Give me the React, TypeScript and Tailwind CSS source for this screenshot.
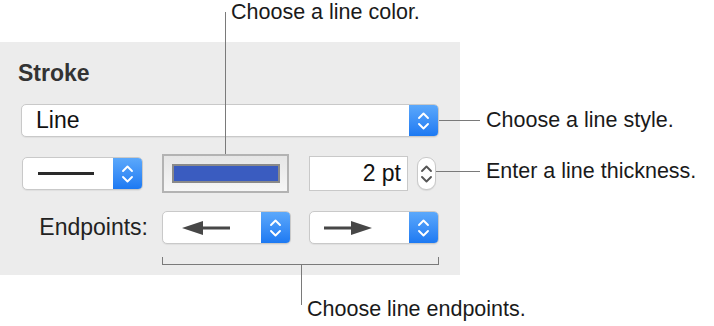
import React from "react";

const FONT = "font-['Helvetica_Neue','Liberation_Sans',Arial,sans-serif]";

function Chevrons({ color = "#fff" }: { color?: string }) {
  return (
    <svg width="13" height="22" viewBox="0 0 13 22" fill="none">
      <path d="M2 8 L6.5 3.5 L11 8" stroke={color} strokeWidth="1.9" strokeLinecap="round" strokeLinejoin="round" />
      <path d="M2 14 L6.5 18.5 L11 14" stroke={color} strokeWidth="1.9" strokeLinecap="round" strokeLinejoin="round" />
    </svg>
  );
}

function Popup({
  className,
  children,
}: {
  className: string;
  children: React.ReactNode;
}) {
  return (
    <div
      className={`flex h-[33px] overflow-hidden rounded-[5px] border border-[#c9c9c9] bg-white shadow-[0_1px_1px_rgba(0,0,0,0.06)] ${className}`}
    >
      <div className="flex min-w-0 flex-1 items-center">{children}</div>
      <div className="flex w-[29px] items-center justify-center bg-gradient-to-b from-[#5ba8fb] to-[#1c79f2]">
        <Chevrons />
      </div>
    </div>
  );
}

function Arrow({ dir }: { dir: "left" | "right" }) {
  return (
    <svg width="50" height="16" viewBox="0 0 50 16">
      {dir === "left" ? (
        <>
          <path d="M0 8 L21 1 L21 15 Z" fill="#474747" />
          <rect x="20" y="6.5" width="28" height="3" fill="#474747" />
        </>
      ) : (
        <>
          <rect x="0" y="6.5" width="28" height="3" fill="#474747" />
          <path d="M48 8 L27 1 L27 15 Z" fill="#474747" />
        </>
      )}
    </svg>
  );
}

export default function App() {
  return (
    <div className={`relative h-[326px] w-[714px] overflow-hidden bg-white text-[#1a1a1a] ${FONT}`}>
      <div className="h-[42px]" />
      <div className="h-[233px] w-[460px] bg-[#ececec] pt-[18px]">
        <div className="ml-[18px] text-[23px] font-bold leading-[26px] text-[#333]">Stroke</div>

        <Popup className="ml-[21px] mt-[18px] w-[418px]">
          <span className="pl-[14px] text-[23px] leading-none text-[#111]">Line</span>
        </Popup>

        <div className="mt-[17px] flex h-[39px] items-center">
          <Popup className="ml-[22px] w-[121px]">
            <div className="ml-[15px] h-[2.5px] w-[56px] bg-[#2a2a2a]" />
          </Popup>
          <div className="ml-[19px] flex h-[39px] w-[127px] items-center justify-center border-2 border-[#b3b3b3] bg-gradient-to-b from-[#e6e6e6] to-[#f6f6f6]">
            <div className="h-[19px] w-[108px] border-2 border-[#8a8a8a] bg-[#3a5cc0]" />
          </div>
          <div className="ml-[20px] flex h-[35px] w-[99px] items-center justify-end border border-[#c9c9c9] bg-white pr-[6px] text-[23px] leading-none text-[#111]">
            2 pt
          </div>
          <div className="ml-[9px] flex h-[33px] w-[19px] items-center justify-center rounded-[9px] border border-[#c9c9c9] bg-white shadow-[0_1px_1px_rgba(0,0,0,0.08)]">
            <Chevrons color="#555" />
          </div>
        </div>

        <div className="mt-[18px] flex items-center">
          <div className="w-[148px] text-right text-[23px] leading-none text-[#222]">Endpoints:</div>
          <Popup className="ml-[14px] w-[129px]">
            <div className="ml-[19px] flex">
              <Arrow dir="left" />
            </div>
          </Popup>
          <Popup className="ml-[18px] w-[130px]">
            <div className="ml-[14px] flex">
              <Arrow dir="right" />
            </div>
          </Popup>
        </div>
      </div>

      {/* callout: line color */}
      <div className="absolute left-[225px] top-[12px] h-[142px] w-px bg-[#7a7a7a]" />
      <div className="absolute left-[231px] top-[-1px] text-[21.5px] leading-[26px]">Choose a line color.</div>

      {/* callout: line style */}
      <div className="absolute left-[439px] top-[120px] h-px w-[41px] bg-[#7a7a7a]" />
      <div className="absolute left-[486px] top-[107px] text-[21.5px] leading-[26px]">Choose a line style.</div>

      {/* callout: thickness */}
      <div className="absolute left-[436px] top-[171px] h-px w-[44px] bg-[#7a7a7a]" />
      <div className="absolute left-[486px] top-[158px] text-[21.5px] leading-[26px]">Enter a line thickness.</div>

      {/* callout: endpoints bracket */}
      <div className="absolute left-[162px] top-[257px] h-[8px] w-[277px] border-x border-b border-[#7a7a7a]" />
      <div className="absolute left-[301px] top-[264px] h-[41px] w-px bg-[#7a7a7a]" />
      <div className="absolute left-[307px] top-[296px] text-[21.5px] leading-[26px]">Choose line endpoints.</div>
    </div>
  );
}
